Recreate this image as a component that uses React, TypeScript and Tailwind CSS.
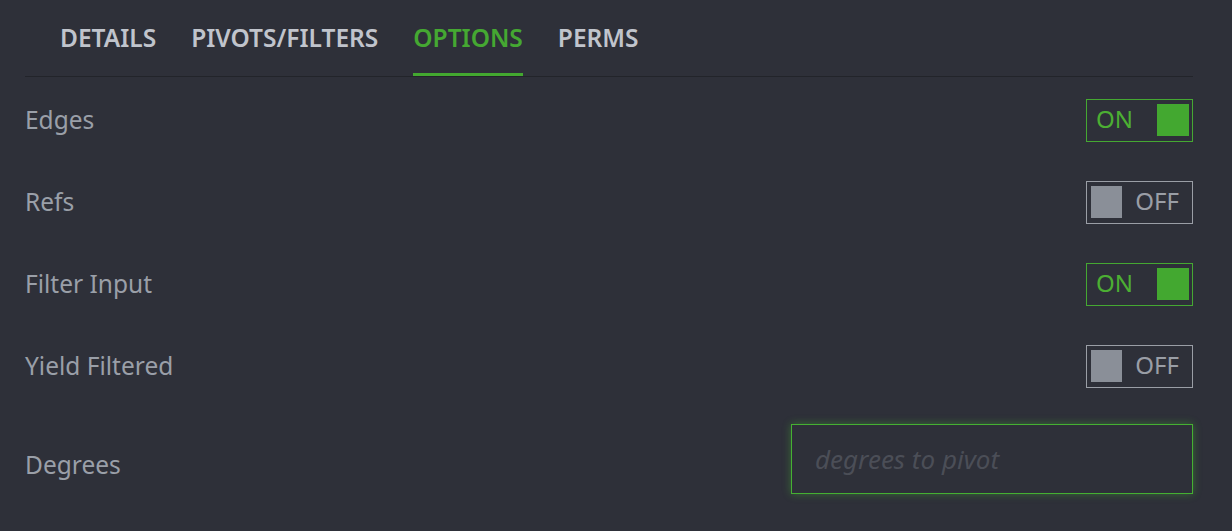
import { useState } from 'react';

const tabs = ['DETAILS', 'PIVOTS/FILTERS', 'OPTIONS', 'PERMS'];

function Toggle({ on }: { on: boolean }) {
  return on ? (
    <div className="flex h-[43px] w-[107px] items-center justify-between border border-[#45a832] pl-[9px] pr-[3px]">
      <span className="-mt-[2px] text-[24px] leading-none text-[#4caf33]">ON</span>
      <span className="h-[32px] w-[32px] bg-[#43a830]" />
    </div>
  ) : (
    <div className="flex h-[43px] w-[107px] items-center justify-between border border-[#9a9ea6] pl-[4px] pr-[13px]">
      <span className="h-[32px] w-[31px] bg-[#8a8f98]" />
      <span className="-mt-[2px] text-[24px] leading-none text-[#9a9ea6]">OFF</span>
    </div>
  );
}

export default function App() {
  const [active] = useState('OPTIONS');
  const rows: [string, boolean][] = [
    ['Edges', true],
    ['Refs', false],
    ['Filter Input', true],
    ['Yield Filtered', false],
  ];
  return (
    <div className="h-[531px] w-[1232px] overflow-hidden bg-[#2e3039] pl-[25px] pr-[39px] font-['Noto_Sans',sans-serif]">
      <div className="flex h-[77px] gap-[35px] border-b border-[#22242a] pl-[35px]">
        {tabs.map((t) => (
          <div
            key={t}
            className={
              'flex h-[76px] items-center border-b-[3px] pt-[4px] text-[24.5px] font-semibold ' +
              (t === active ? 'border-[#43a830] text-[#45a832]' : 'border-transparent text-[#c0c4cc]')
            }
          >
            {t}
          </div>
        ))}
      </div>
      <div className="pt-[2px]">
        {rows.map(([label, on]) => (
          <div key={label} className="flex h-[82px] items-center justify-between">
            <span className="text-[24.5px] text-[#9a9fa8]">{label}</span>
            <Toggle on={on} />
          </div>
        ))}
        <div className="flex h-[104px] items-center justify-between pt-[6px]">
          <span className="mt-[6px] text-[24.5px] text-[#9a9fa8]">Degrees</span>
          <input
            placeholder="degrees to pivot"
            className="-mt-[6px] h-[70px] w-[402px] border border-[#45b032] bg-transparent px-[23px] text-[26px] italic text-[#c3c7cf] shadow-[0_0_8px_rgba(70,180,50,0.45)] outline-none placeholder:text-[#4b4e57]"
          />
        </div>
      </div>
    </div>
  );
}
